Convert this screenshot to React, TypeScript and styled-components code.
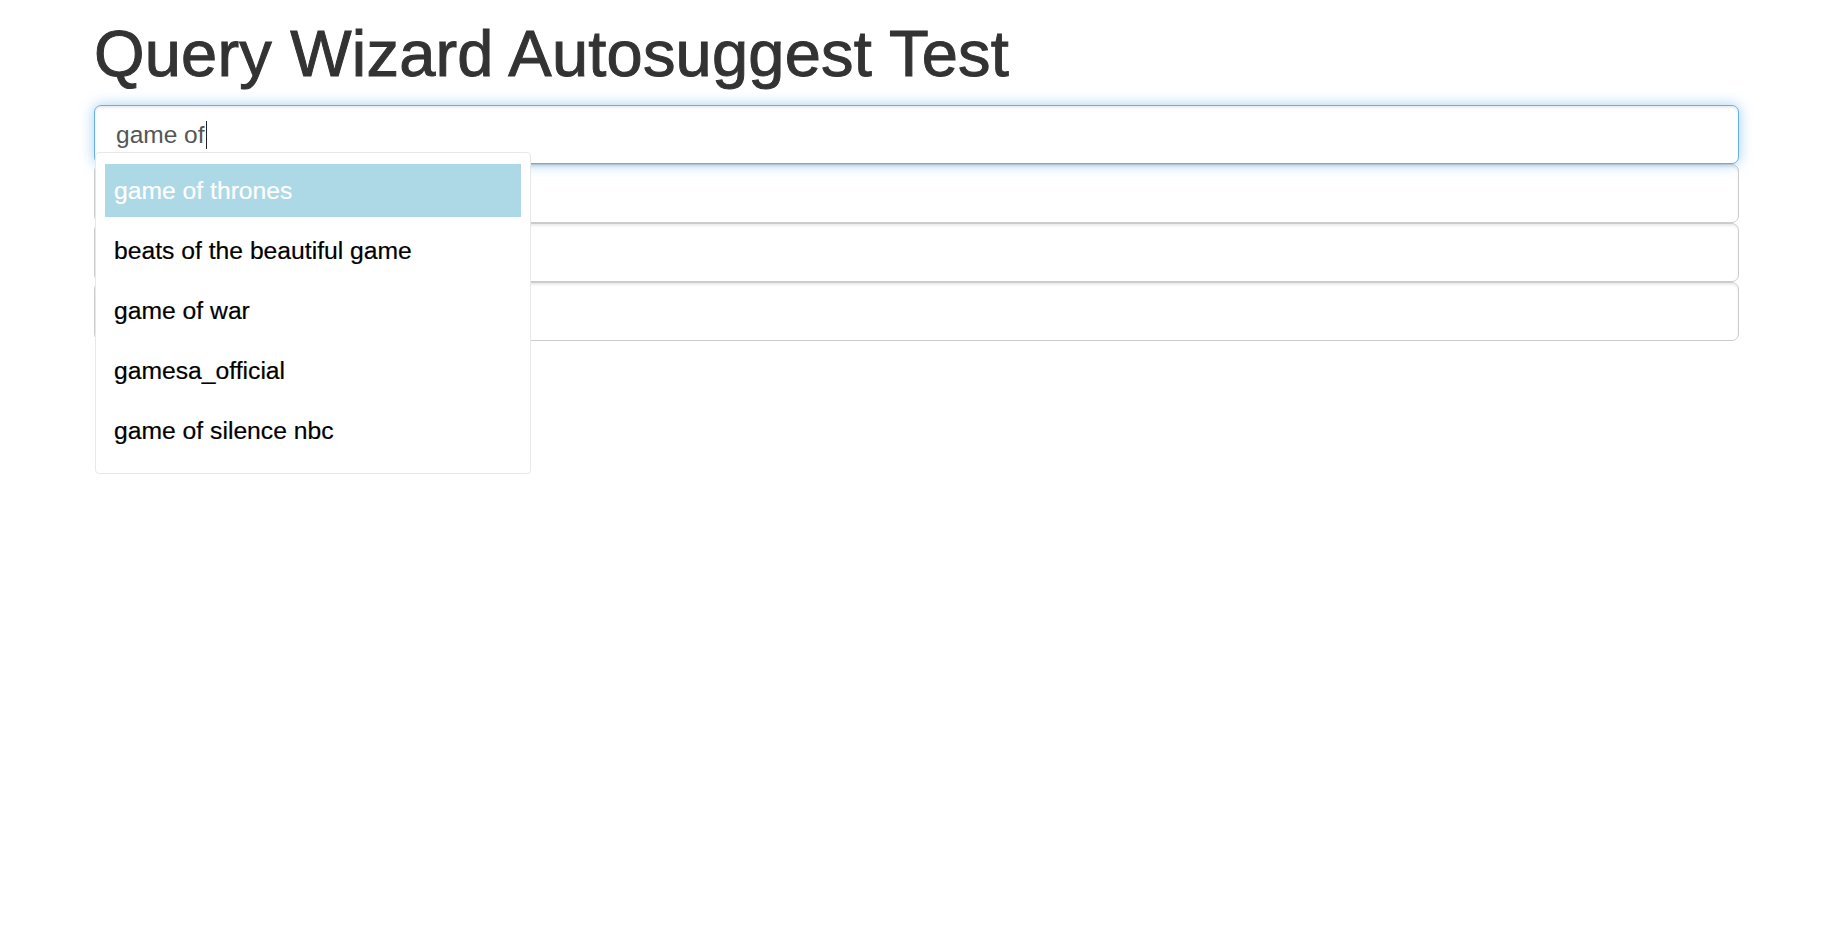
import React from "react";
import styled, { createGlobalStyle, css } from "styled-components";

const Global = createGlobalStyle`
  html, body { margin: 0; padding: 0; background: #fff; }
  body { font-family: "Liberation Sans", Arial, sans-serif; color: #333; }
  #root { min-height: 945px; }
  * { box-sizing: border-box; }
`;

const Page = styled.div`
  padding: 0 84px 0 94px;
  width: 1823px;
  min-height: 945px;
`;

const Title = styled.h1`
  margin: 19px 0 16px 0;
  font-size: 65px;
  line-height: 70px;
  font-weight: 400;
  color: #333;
  -webkit-text-stroke: 1px #333;
  letter-spacing: 0.2px;
`;

const Stack = styled.div`
  display: flex;
  flex-direction: column;
  width: 1645px;
`;

const Field = styled.div`
  position: relative;
  z-index: 2;
`;

const Input = styled.div<{ $focused?: boolean }>`
  height: 59px;
  display: flex;
  align-items: center;
  padding: 0 21px;
  font-size: 24.5px;
  color: #555;
  background: #fff;
  border: 1px solid #ccc;
  border-radius: 7px;
  box-shadow: inset 0 2px 2px rgba(0, 0, 0, 0.075);
  ${(p) =>
    p.$focused &&
    css`
      border-color: #66afe9;
      box-shadow: inset 0 2px 2px rgba(0, 0, 0, 0.075),
        0 0 14px rgba(102, 175, 233, 0.6);
    `}
`;

const Caret = styled.span`
  display: inline-block;
  width: 1px;
  height: 28px;
  background: #222;
  margin-left: 1px;
`;

const Suggestions = styled.ul`
  position: absolute;
  z-index: 3;
  top: 47px;
  left: 1px;
  width: 436px;
  margin: 0;
  padding: 11px 9px 16px;
  list-style: none;
  background: #fff;
  border: 1px solid #e8e8e8;
  border-radius: 4px;
`;

const Suggestion = styled.li<{ $active?: boolean }>`
  height: 53px;
  margin-bottom: 7px;
  display: flex;
  align-items: center;
  padding: 0 9px;
  font-size: 24.7px;
  color: #000;
  -webkit-text-stroke: 0.2px currentColor;
  &:last-child { margin-bottom: 0; }
  ${(p) =>
    p.$active &&
    css`
      background: #add8e6;
      color: #fff;
    `}
`;

const items = [
  "game of thrones",
  "beats of the beautiful game",
  "game of war",
  "gamesa_official",
  "game of silence nbc",
];

export default function App() {
  return (
    <>
      <Global />
      <Page>
        <Title>Query Wizard Autosuggest Test</Title>
        <Stack>
          <Field>
            <Input $focused>
              game of
              <Caret />
            </Input>
            <Suggestions>
              {items.map((t, i) => (
                <Suggestion key={t} $active={i === 0}>
                  {t}
                </Suggestion>
              ))}
            </Suggestions>
          </Field>
          <Input />
          <Input />
          <Input />
        </Stack>
      </Page>
    </>
  );
}
